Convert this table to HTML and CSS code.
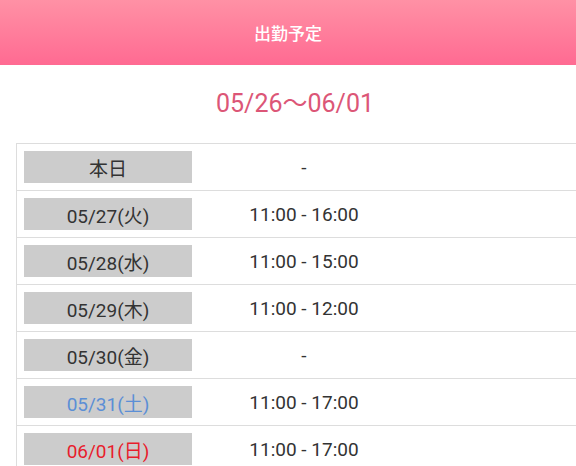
FILE: index.html
```html
<!DOCTYPE html>
<html lang="ja">
<head>
<meta charset="utf-8">
<link rel="stylesheet" href="styles.css">
</head>
<body>
<header class="bar"><h1 class="bar-title">出勤予定</h1></header>
<div class="range">05/26〜06/01</div>
<div class="schedule">
  <div class="row"><div class="day">本日</div><div class="time">-</div></div>
  <div class="row"><div class="day">05/27(火)</div><div class="time">11:00 - 16:00</div></div>
  <div class="row"><div class="day">05/28(水)</div><div class="time">11:00 - 15:00</div></div>
  <div class="row"><div class="day">05/29(木)</div><div class="time">11:00 - 12:00</div></div>
  <div class="row"><div class="day">05/30(金)</div><div class="time">-</div></div>
  <div class="row"><div class="day sat">05/31(土)</div><div class="time">11:00 - 17:00</div></div>
  <div class="row"><div class="day sun">06/01(日)</div><div class="time">11:00 - 17:00</div></div>
</div>
</body>
</html>
```
FILE: styles.css
```css
html, body {
  margin: 0;
  padding: 0;
  background: #fff;
  font-family: Roboto, "Noto Sans CJK JP", sans-serif;
  color: #333;
}
.bar {
  height: 65px;
  background: linear-gradient(to bottom, #ff91a5 0%, #ff6a92 100%);
  display: flex;
  align-items: center;
  justify-content: center;
}
.bar-title {
  margin: 0;
  font-size: 17px;
  font-weight: 500;
  color: #fff;
  font-family: "Noto Sans CJK JP", sans-serif;
}
.range {
  height: 78px;
  display: flex;
  align-items: center;
  justify-content: center;
  font-size: 25px;
  color: #dc5677;
  padding: 0 0 6px 14px;
  box-sizing: border-box;
}
.schedule {
  margin-left: 16px;
  border-left: 1px solid #ddd;
  border-top: 1px solid #ddd;
}
.row {
  display: flex;
  align-items: center;
  border-bottom: 1px solid #ddd;
  padding: 7px 0 7px 7px;
}
.day {
  width: 168px;
  height: 32px;
  background: #cccccc;
  display: flex;
  align-items: center;
  justify-content: center;
  font-size: 19px;
  color: #333;
}
.day.sat { color: #5b8fd6; }
.day.sun { color: #e81c2c; }
.time {
  margin-left: 8px;
  width: 208px;
  text-align: center;
  font-size: 19px;
  color: #333;
}
```
